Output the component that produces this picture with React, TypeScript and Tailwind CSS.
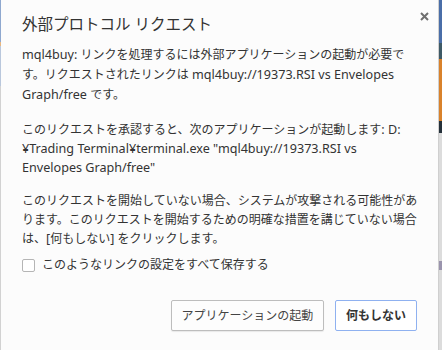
import React from 'react';

const font = { fontFamily: '"Noto Sans", "Noto Sans CJK JP", sans-serif' };

// Latin runs are set a bit larger than the Japanese ones, as Meiryo does
const L: React.FC<{ children: React.ReactNode }> = ({ children }) => (
  <span className="text-[12.6px]">{children}</span>
);

export default function App() {
  return (
    <div className="w-[442px] h-[350px] flex bg-[#e6e6e6] overflow-hidden" style={font}>
      {/* left edge of the window behind */}
      <div className="w-[1px] shrink-0 flex flex-col">
        <div className="h-[42px] bg-[#8fa8cf]" />
        <div className="h-[4px] bg-[#e8b780]" />
        <div className="h-[40px] bg-[#b9c7dc]" />
        <div className="flex-1 bg-[#d2d2d2]" />
      </div>

      <div className="w-[437px] shrink-0 min-w-0 overflow-hidden bg-[#fcfcfc] flex flex-col px-[21px] pt-[12px] text-[#333333] relative">
        <div className="flex items-center h-[26px]">
          <h1 className="text-[15.5px] text-[#333333] whitespace-nowrap">外部プロトコル リクエスト</h1>
          <button className="absolute right-[7px] top-[9px] w-[14px] h-[14px] flex items-center justify-center">
            <svg width="9" height="9" viewBox="0 0 9 9">
              <path d="M1 1 L8 8 M8 1 L1 8" stroke="#6f6f6f" strokeWidth="2" />
            </svg>
          </button>
        </div>

        <p className="mt-[7px] text-[12px] leading-[20px] whitespace-nowrap">
          <L>mql4buy: </L>リンクを処理するには外部アプリケーションの起動が必要で<br />
          す。リクエストされたリンクは <L>mql4buy://19373.RSI vs Envelopes</L><br />
          <L>Graph/free </L>です。
        </p>

        <p className="mt-[15px] text-[12px] leading-[19px] whitespace-nowrap">
          このリクエストを承認すると、次のアプリケーションが起動します<L>: D:</L><br />
          <L>¥Trading Terminal¥terminal.exe "mql4buy://19373.RSI vs</L><br />
          <L>Envelopes Graph/free"</L>
        </p>

        <p className="mt-[14px] text-[12px] leading-[19px] whitespace-nowrap">
          このリクエストを開始していない場合、システムが攻撃される可能性があ<br />
          ります。このリクエストを開始するための明確な措置を講じていない場合<br />
          は、<L>[</L>何もしない<L>] </L>をクリックします。
        </p>

        <label className="mt-[9px] flex items-center gap-[7px] text-[12px] h-[16px]">
          <span className="w-[13px] h-[13px] shrink-0 border border-[#b5b5b5] rounded-[2px] bg-white" />
          <span className="whitespace-nowrap">このようなリンクの設定をすべて保存する</span>
        </label>

        <div className="mt-[27px] flex justify-end gap-[11px]">
          <button className="h-[31px] w-[153px] border border-[#bdbdbd] rounded-[2px] bg-[#fdfdfd] text-[12px] text-[#444444] shadow-[0_1px_1px_rgba(0,0,0,0.08)]">
            アプリケーションの起動
          </button>
          <button className="h-[31px] w-[82px] border border-[#8fb1f0] rounded-[2px] bg-white text-[12px] font-bold text-[#333333]">
            何もしない
          </button>
        </div>
      </div>

      {/* right edge: border + window behind */}
      <div className="w-[1px] shrink-0 bg-[#cfcfcf]" />
      <div className="w-[3px] shrink-0 flex flex-col">
        <div className="h-[43px] bg-[#4a6ea8]" />
        <div className="h-[16px] bg-[#3e5a66]" />
        <div className="h-[62px] bg-[#d9822b]" />
        <div className="h-[12px] bg-[#25313a]" />
        <div className="h-[128px] bg-[#dcdcdc]" />
        <div className="h-[9px] bg-[#9a94ad]" />
        <div className="flex-1 bg-[#dcdcdc]" />
      </div>
    </div>
  );
}
